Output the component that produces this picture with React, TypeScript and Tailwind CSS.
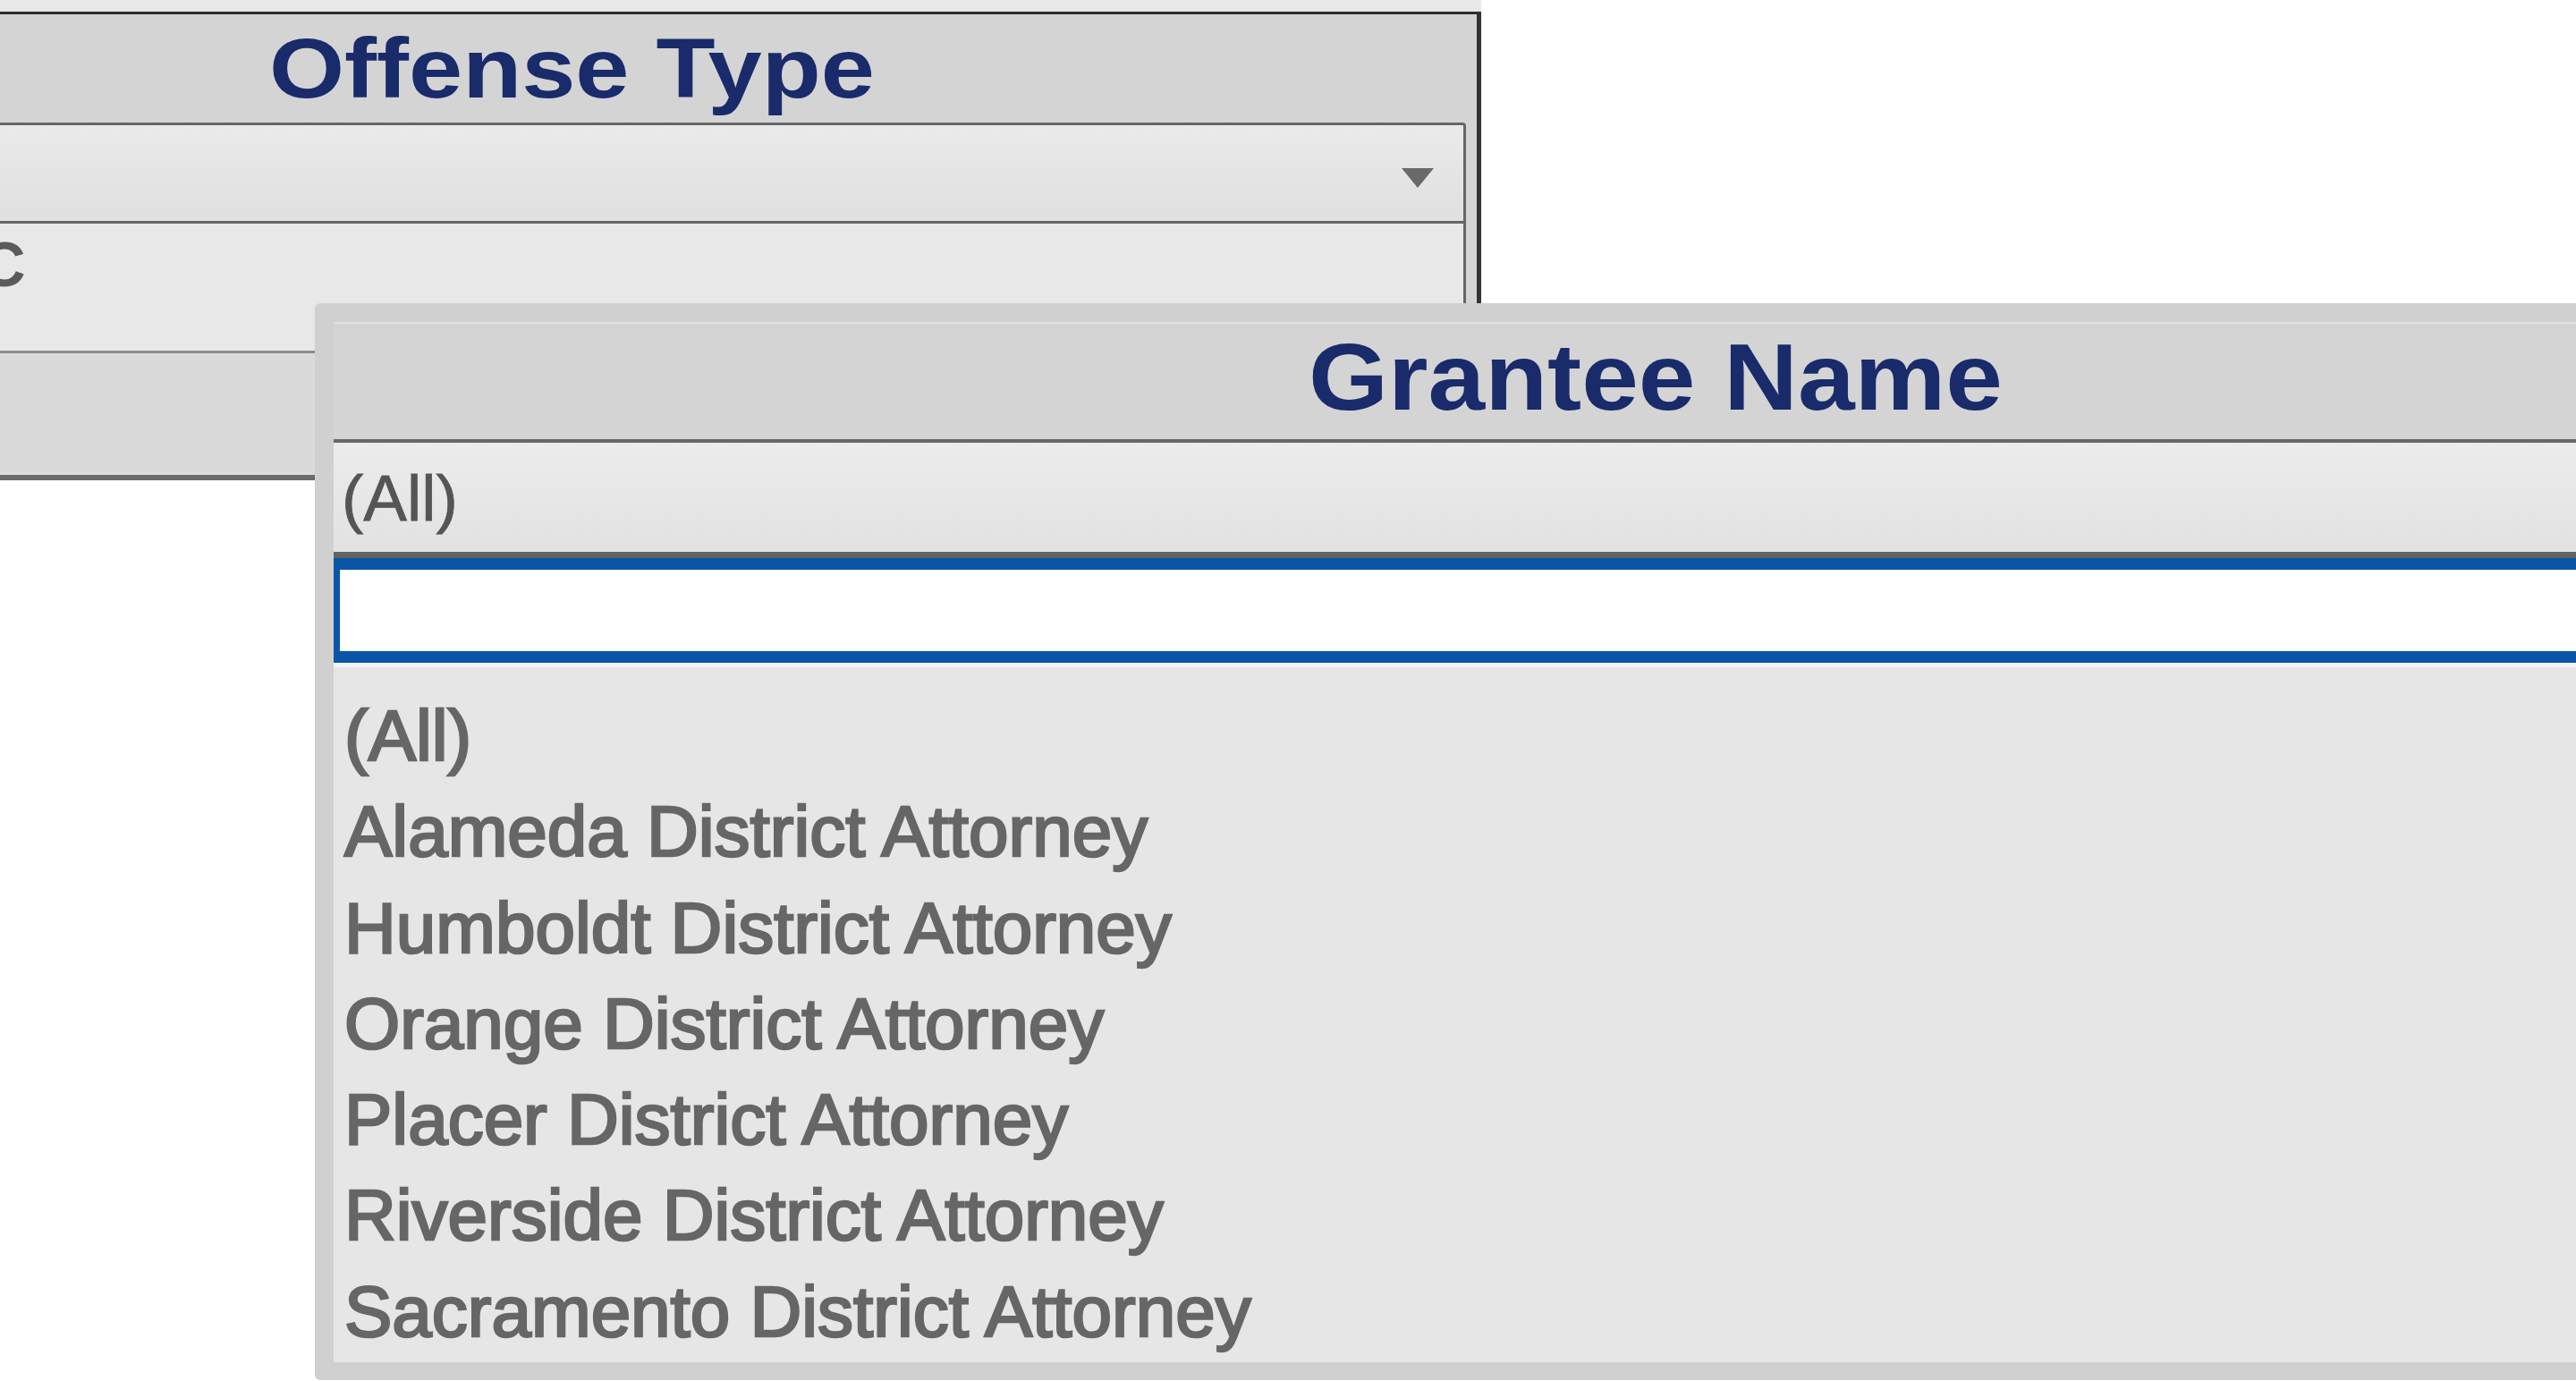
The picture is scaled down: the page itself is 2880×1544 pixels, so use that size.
import React from "react"

const grantees = [
  "(All)",
  "Alameda District Attorney",
  "Humboldt District Attorney",
  "Orange District Attorney",
  "Placer District Attorney",
  "Riverside District Attorney",
  "Sacramento District Attorney",
]

const OffensePanel = () => {
  return (
    <div className="w-[1656px] bg-[#e8e8e8] pt-[13px]">
      <div className="flex flex-col border-t-[3px] border-r-[5px] border-b-[6px] border-t-[#2e2e2e] border-r-[#333333] border-b-[#6b6b6b] bg-[#d4d4d4]">
        {/* titre du filtre */}
        <div className="flex h-[121px] items-center pl-[301px]">
          <span className="origin-left scale-x-[1.15] text-[94px] leading-none font-bold text-[#1a2b6b]">
            Offense Type
          </span>
        </div>

        <div className="pr-[12px]">
          <div className="flex h-[113px] items-center justify-end rounded-tr-[4px] border-t-[3px] border-r-[3px] border-b-[3px] border-[#666666] bg-gradient-to-b from-[#eaeaea] to-[#e0e0e0] pt-[10px] pr-[33px]">
            <svg width="36" height="22" viewBox="0 0 36 22">
              <polygon points="0,0 36,0 18,22" fill="#6a6a6a" />
            </svg>
          </div>
          <div className="h-[145px] overflow-hidden border-r-[3px] border-b-[3px] border-r-[#666666] border-b-[#8c8c8c] bg-[#e8e8e8] pt-[11px]">
            <span className="ml-[-22px] block text-[70px] leading-none font-bold text-[#5a5a5a]">C</span>
          </div>
        </div>

        <div className="h-[136px] bg-[#dadada]" />
      </div>
    </div>
  )
}

const GranteePopup = () => {
  return (
    <div className="absolute top-[339px] left-[352px] h-[1204px] w-[2998px] rounded-[6px] bg-[#d0d0d0] p-[21px] pb-[20px]">
      <div className="flex h-full flex-col bg-[#e6e6e6]">
        <div className="h-[2px] bg-[#e2e2e2]" />
        <div className="flex h-[129px] items-center justify-center bg-[#d4d4d4] pb-[10px]">
          <span className="scale-x-[1.09] text-[105px] leading-none font-bold text-[#1a2b6b]">
            Grantee Name
          </span>
        </div>
        <div className="h-[4px] bg-[#686868]" />

        {/* valeur actuelle */}
        <div className="flex h-[122px] items-center bg-gradient-to-b from-[#ececec] to-[#e2e2e2] pl-[9px]">
          <span className="text-[73px] leading-none text-[#555555] [-webkit-text-stroke:0.8px_#555555]">(All)</span>
        </div>
        <div className="h-[7px] bg-[#636363]" />

        <div className="h-[117px] border-t-[13px] border-b-[13px] border-l-[7px] border-[#0a55a8] bg-white" />
        <div className="h-[5px] bg-[#f3f3f3]" />

        <ul className="flex flex-col pt-[23px] pl-[12px]">
          {grantees.map((name) => (
            <li
              key={name}
              className="text-[80px] leading-[107.3px] whitespace-nowrap text-[#666666] [-webkit-text-stroke:2.6px_#666666]"
            >
              {name}
            </li>
          ))}
        </ul>
      </div>
    </div>
  )
}

export default function App() {
  return (
    <div className="relative h-screen w-full overflow-hidden bg-white font-['Liberation_Sans',Arial,sans-serif]">
      <OffensePanel />
      <GranteePopup />
    </div>
  )
}
